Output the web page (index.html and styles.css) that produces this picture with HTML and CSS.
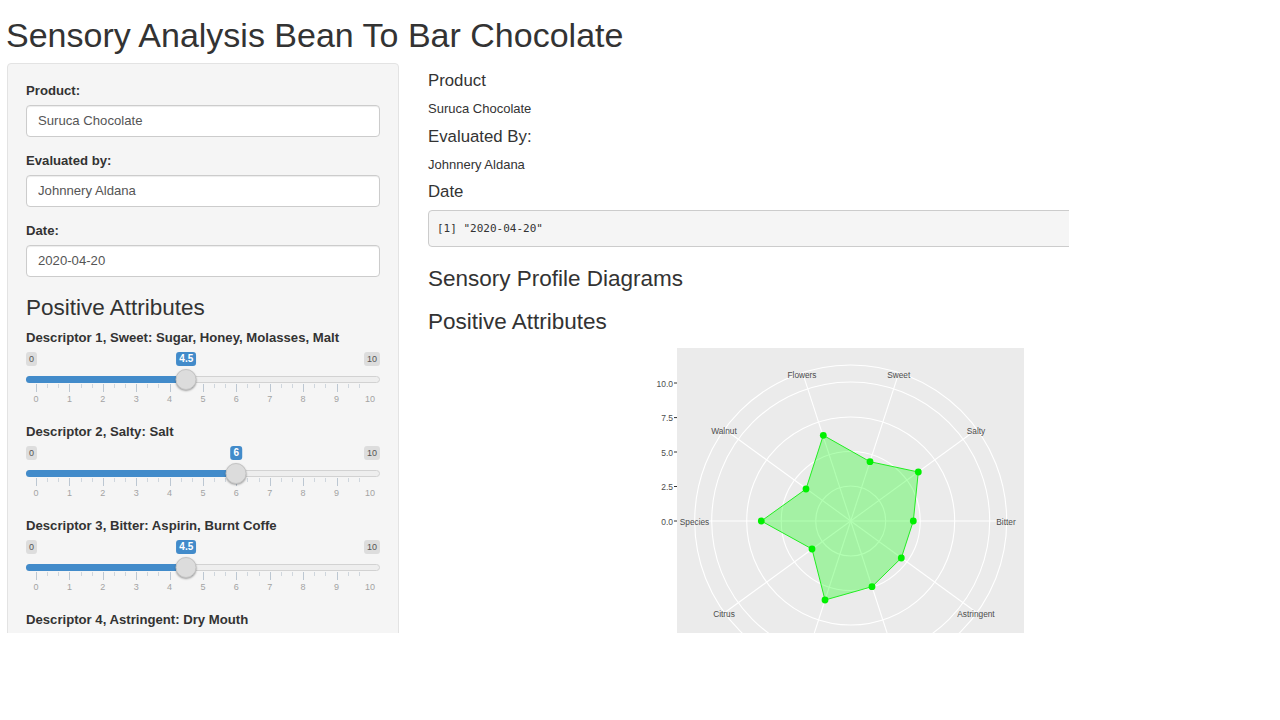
FILE: index.html
```html
<!DOCTYPE html>
<html lang="en">
<head>
    <meta charset="UTF-8">
    <meta name="viewport" content="width=device-width, initial-scale=1.0">
    <title>Sensory Analysis Bean To Bar Chocolate</title>
    <link rel="stylesheet" href="styles.css">
</head>
<body>
    <div class="page">
        <h2 class="page-title">Sensory Analysis Bean To Bar Chocolate</h2>
        <div class="layout">
            <form class="sidebar">
                <div class="form-group">
                    <label>Product:</label>
                    <input class="form-control" type="text" value="Suruca Chocolate">
                </div>
                <div class="form-group">
                    <label>Evaluated by:</label>
                    <input class="form-control" type="text" value="Johnnery Aldana">
                </div>
                <div class="form-group">
                    <label>Date:</label>
                    <input class="form-control" type="text" value="2020-04-20">
                </div>

                <h3 class="section-title">Positive Attributes</h3>

                <div class="slider-group">
                    <label>Descriptor 1, Sweet: Sugar, Honey, Molasses, Malt</label>
                    <div class="slider">
                        <div class="slider-ends"><span>0</span><span>10</span></div>
                        <div class="slider-track"></div>
                        <div class="slider-handles">
                            <div class="slider-fill" style="width: calc(45% + 10px)"></div>
                            <span class="slider-value" style="left: 45%">4.5</span>
                            <span class="slider-thumb" style="left: 45%"></span>
                        </div>
                        <div class="slider-ticks"></div>
                        <div class="slider-nums">
                            <span>0</span><span>1</span><span>2</span><span>3</span><span>4</span><span>5</span><span>6</span><span>7</span><span>8</span><span>9</span><span>10</span>
                        </div>
                    </div>
                </div>

                <div class="slider-group">
                    <label>Descriptor 2, Salty: Salt</label>
                    <div class="slider">
                        <div class="slider-ends"><span>0</span><span>10</span></div>
                        <div class="slider-track"></div>
                        <div class="slider-handles">
                            <div class="slider-fill" style="width: calc(60% + 10px)"></div>
                            <span class="slider-value" style="left: 60%">6</span>
                            <span class="slider-thumb" style="left: 60%"></span>
                        </div>
                        <div class="slider-ticks"></div>
                        <div class="slider-nums">
                            <span>0</span><span>1</span><span>2</span><span>3</span><span>4</span><span>5</span><span>6</span><span>7</span><span>8</span><span>9</span><span>10</span>
                        </div>
                    </div>
                </div>

                <div class="slider-group">
                    <label>Descriptor 3, Bitter: Aspirin, Burnt Coffe</label>
                    <div class="slider">
                        <div class="slider-ends"><span>0</span><span>10</span></div>
                        <div class="slider-track"></div>
                        <div class="slider-handles">
                            <div class="slider-fill" style="width: calc(45% + 10px)"></div>
                            <span class="slider-value" style="left: 45%">4.5</span>
                            <span class="slider-thumb" style="left: 45%"></span>
                        </div>
                        <div class="slider-ticks"></div>
                        <div class="slider-nums">
                            <span>0</span><span>1</span><span>2</span><span>3</span><span>4</span><span>5</span><span>6</span><span>7</span><span>8</span><span>9</span><span>10</span>
                        </div>
                    </div>
                </div>

                <div class="slider-group">
                    <label>Descriptor 4, Astringent: Dry Mouth</label>
                </div>
            </form>

            <main class="main">
                <h4>Product</h4>
                <p>Suruca Chocolate</p>
                <h4>Evaluated By:</h4>
                <p>Johnnery Aldana</p>
                <h4>Date</h4>
                <pre class="output">[1] "2020-04-20"</pre>
                <h3 class="diagram-title">Sensory Profile Diagrams</h3>
                <h3 class="diagram-title">Positive Attributes</h3>

                <svg class="radar" width="400" height="285" viewBox="648 348 400 285">
                    <rect class="panel" x="677" y="348" width="347" height="285"/>

                    <!-- grid -->
                    <g class="grid">
                        <circle cx="850.7" cy="521" r="35"/>
                        <circle cx="850.7" cy="521" r="69.5"/>
                        <circle cx="850.7" cy="521" r="104"/>
                        <circle cx="850.7" cy="521" r="139"/>
                        <circle cx="850.7" cy="521" r="156"/>
                        <line x1="850.7" y1="521" x2="898.9" y2="372.6"/>
                        <line x1="850.7" y1="521" x2="976.9" y2="429.3"/>
                        <line x1="850.7" y1="521" x2="1006.7" y2="521"/>
                        <line x1="850.7" y1="521" x2="976.9" y2="612.7"/>
                        <line x1="850.7" y1="521" x2="898.9" y2="669.4"/>
                        <line x1="850.7" y1="521" x2="802.5" y2="669.4"/>
                        <line x1="850.7" y1="521" x2="724.5" y2="612.7"/>
                        <line x1="850.7" y1="521" x2="694.7" y2="521"/>
                        <line x1="850.7" y1="521" x2="724.5" y2="429.3"/>
                        <line x1="850.7" y1="521" x2="802.5" y2="372.6"/>
                    </g>

                    <!-- y axis -->
                    <g class="axis-ticks">
                        <line x1="674" y1="383" x2="677" y2="383"/>
                        <line x1="674" y1="417.6" x2="677" y2="417.6"/>
                        <line x1="674" y1="452" x2="677" y2="452"/>
                        <line x1="674" y1="486.5" x2="677" y2="486.5"/>
                        <line x1="674" y1="521" x2="677" y2="521"/>
                    </g>
                    <g class="axis-labels">
                        <text x="673" y="386.5">10.0</text>
                        <text x="673" y="421">7.5</text>
                        <text x="673" y="455.5">5.0</text>
                        <text x="673" y="490">2.5</text>
                        <text x="673" y="524.5">0.0</text>
                    </g>

                    <polygon class="profile" points="870,461.7 918.3,472 913.3,521 901.3,558 872,586.7 825,600 812,549 761.3,521 806,489 823.3,435.3"/>
                    <g class="points">
                        <circle cx="870" cy="461.7" r="3.4"/>
                        <circle cx="918.3" cy="472" r="3.4"/>
                        <circle cx="913.3" cy="521" r="3.4"/>
                        <circle cx="901.3" cy="558" r="3.4"/>
                        <circle cx="872" cy="586.7" r="3.4"/>
                        <circle cx="825" cy="600" r="3.4"/>
                        <circle cx="812" cy="549" r="3.4"/>
                        <circle cx="761.3" cy="521" r="3.4"/>
                        <circle cx="806" cy="489" r="3.4"/>
                        <circle cx="823.3" cy="435.3" r="3.4"/>
                    </g>

                    <g class="spoke-labels">
                        <text x="802" y="377.5">Flowers</text>
                        <text x="898.7" y="377.5">Sweet</text>
                        <text x="976" y="434">Salty</text>
                        <text x="1006" y="525">Bitter</text>
                        <text x="976" y="617">Astringent</text>
                        <text x="724" y="617">Citrus</text>
                        <text x="694.5" y="525">Species</text>
                        <text x="724" y="434">Walnut</text>
                    </g>
                </svg>
            </main>
        </div>
    </div>
</body>
</html>
```

FILE: styles.css
```css
* {
    box-sizing: border-box;
}

body {
    margin: 0;
    background-color: #fff;
    color: #333;
    font-family: 'Liberation Sans', Arial, sans-serif;
    font-size: 13px;
    line-height: 20px;
}

.page {
    width: 1069px;
    height: 633px;
    overflow: hidden;
}

.page-title {
    margin: 0;
    padding: 15px 0 0 6px;
    height: 63px;
    font-size: 34px;
    font-weight: 400;
    line-height: 40px;
}

.layout {
    display: flex;
    gap: 29px;
}

.sidebar {
    flex: 0 0 392px;
    margin-left: 7px;
    padding: 17px 18px 0;
    height: 600px;
    background-color: #f5f5f5;
    border: 1px solid #e3e3e3;
    border-radius: 4px;
}

label {
    display: block;
    margin-bottom: 4px;
    font-size: 13.15px;
    font-weight: 700;
}

.form-group {
    margin-bottom: 14.5px;
}

.form-control {
    display: block;
    width: 100%;
    height: 31.5px;
    padding: 0 11px;
    background-color: #fff;
    border: 1px solid #ccc;
    border-radius: 4px;
    box-shadow: inset 0 1px 1px rgba(0, 0, 0, .075);
    color: #555;
    font-family: inherit;
    font-size: 13.15px;
}

.section-title {
    margin: 0 0 5px;
    padding-top: 2px;
    font-size: 22.5px;
    font-weight: 400;
    line-height: 30px;
}

.slider-group {
    height: 94px;
}

.slider {
    position: relative;
}

.slider-ends {
    display: flex;
    justify-content: space-between;
    height: 14px;
    font-size: 9px;
    line-height: 14px;
    color: #555;
}

.slider-ends span {
    padding: 0 3px;
    background-color: #ddd;
    border-radius: 3px;
}

.slider-track {
    height: 7px;
    margin-top: 10px;
    background-color: #eee;
    border: 1px solid #d2d2d2;
    border-radius: 4px;
}

/* value, fill and thumb are 10px inset at both ends, like the ticks */
.slider-handles {
    position: absolute;
    top: 0;
    left: 10px;
    right: 10px;
    height: 0;
}

.slider-fill {
    position: absolute;
    top: 24px;
    left: -10px;
    height: 7px;
    background-color: #428bca;
    border-radius: 4px 0 0 4px;
}

.slider-value {
    position: absolute;
    top: 0;
    padding: 0 3px;
    height: 14px;
    background-color: #428bca;
    border-radius: 3px;
    color: #fff;
    font-size: 10px;
    font-weight: 700;
    line-height: 14px;
    transform: translateX(-50%);
}

.slider-thumb {
    position: absolute;
    top: 17px;
    width: 21px;
    height: 21px;
    background-color: #dcdcdc;
    border: 1px solid #c4c4c4;
    border-radius: 50%;
    box-shadow: 0 1px 2px rgba(0, 0, 0, .35);
    transform: translateX(-50%);
}

.slider-ticks {
    height: 8px;
    margin: 1px 10px 0;
    background-image:
        repeating-linear-gradient(to right, #bcc7d2 0, #bcc7d2 1px, transparent 1px, transparent 33.4px),
        repeating-linear-gradient(to right, #cfd6dd 0, #cfd6dd 1px, transparent 1px, transparent 11.13px);
    background-size: 100% 8px, 100% 4px;
    background-repeat: no-repeat;
}

.slider-nums {
    display: flex;
    justify-content: space-between;
    margin: 1px 0 0;
    padding: 0 3px;
    font-size: 9px;
    line-height: 12px;
    color: #a3a3a3;
}

.slider-nums span {
    width: 14px;
    text-align: center;
}

.main {
    flex: 0 0 641px;
    min-width: 0;
    padding-top: 1px;
}

.main h4 {
    margin: 0;
    padding-top: 7px;
    font-size: 16.8px;
    font-weight: 400;
    line-height: 20px;
}

.main p {
    margin: 0;
    padding-top: 8px;
    height: 28.5px;
    font-size: 13px;
    line-height: 20px;
}

.output {
    width: 660px;
    height: 37px;
    margin: 8px 0 0;
    padding: 0 8px;
    background-color: #f5f5f5;
    border: 1px solid #ccc;
    border-radius: 4px;
    color: #333;
    font-family: 'DejaVu Sans Mono', 'Liberation Mono', monospace;
    font-size: 11px;
    line-height: 36px;
}

.diagram-title {
    margin: 0;
    padding-top: 17px;
    height: 43px;
    font-size: 22.5px;
    font-weight: 400;
    line-height: 30px;
}

.radar {
    display: block;
    margin: 15px 0 0 220px;
}

.panel {
    fill: #ebebeb;
}

.grid {
    fill: none;
    stroke: #fff;
    stroke-width: 1.1;
}

.axis-ticks {
    stroke: #333;
    stroke-width: 1;
}

.axis-labels text {
    fill: #4d4d4d;
    font-size: 8.5px;
    text-anchor: end;
}

.profile {
    fill: rgba(0, 255, 0, .3);
    stroke: #22ee22;
    stroke-width: 1;
}

.points {
    fill: #00f000;
}

.spoke-labels text {
    fill: #4d4d4d;
    font-size: 8.3px;
    text-anchor: middle;
}
```
